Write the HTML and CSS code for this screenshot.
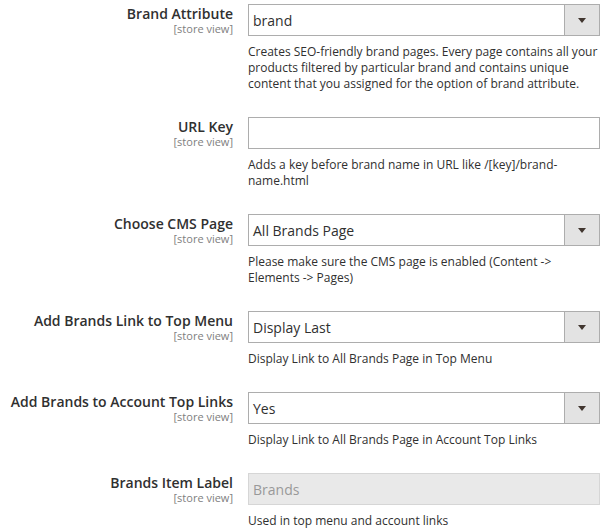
FILE: index.html
```html
<!DOCTYPE html>
<html>
<head>
<meta charset="utf-8">
<link rel="stylesheet" href="styles.css">
</head>
<body>
<div class="form">
  <div class="field">
    <div class="label"><span class="title">Brand Attribute</span><span class="scope">[store view]</span></div>
    <div class="control">
      <div class="select"><span class="value">brand</span><span class="btn"><span class="arrow"></span></span></div>
      <div class="note">Creates SEO-friendly brand pages. Every page contains all your products filtered by particular brand and contains unique content that you assigned for the option of brand attribute.</div>
    </div>
  </div>
  <div class="field">
    <div class="label"><span class="title">URL Key</span><span class="scope">[store view]</span></div>
    <div class="control">
      <div class="input"></div>
      <div class="note">Adds a key before brand name in URL like /[key]/brand-name.html</div>
    </div>
  </div>
  <div class="field">
    <div class="label"><span class="title">Choose CMS Page</span><span class="scope">[store view]</span></div>
    <div class="control">
      <div class="select"><span class="value">All Brands Page</span><span class="btn"><span class="arrow"></span></span></div>
      <div class="note">Please make sure the CMS page is enabled (Content -&gt; Elements -&gt; Pages)</div>
    </div>
  </div>
  <div class="field">
    <div class="label"><span class="title">Add Brands Link to Top Menu</span><span class="scope">[store view]</span></div>
    <div class="control">
      <div class="select"><span class="value">Display Last</span><span class="btn"><span class="arrow"></span></span></div>
      <div class="note">Display Link to All Brands Page in Top Menu</div>
    </div>
  </div>
  <div class="field">
    <div class="label"><span class="title">Add Brands to Account Top Links</span><span class="scope">[store view]</span></div>
    <div class="control">
      <div class="select"><span class="value">Yes</span><span class="btn"><span class="arrow"></span></span></div>
      <div class="note">Display Link to All Brands Page in Account Top Links</div>
    </div>
  </div>
  <div class="field">
    <div class="label"><span class="title">Brands Item Label</span><span class="scope">[store view]</span></div>
    <div class="control">
      <div class="input disabled"><span class="value">Brands</span></div>
      <div class="note">Used in top menu and account links</div>
    </div>
  </div>
</div>
</body>
</html>
```
FILE: styles.css
```css
html, body {
  margin: 0;
  padding: 0;
  background: #ffffff;
}
body {
  font-family: "Open Sans", "Liberation Sans", sans-serif;
  color: #303030;
}
.form {
  display: flex;
  flex-direction: column;
  gap: 25px;
  padding-top: 4px;
}
.field {
  display: flex;
  align-items: flex-start;
}
.label {
  width: 233px;
  flex: none;
  display: flex;
  flex-direction: column;
  align-items: flex-end;
  padding-top: 1px;
}
.title {
  font-size: 14px;
  font-weight: 600;
  line-height: 17px;
  color: #303030;
}
.scope {
  font-size: 11px;
  line-height: 13px;
  color: #808080;
}
.control {
  margin-left: 15px;
  width: 352px;
  flex: none;
}
.select, .input {
  box-sizing: border-box;
  height: 32px;
  border: 1px solid #adadad;
  display: flex;
  align-items: center;
  background: #fff;
}
.value {
  flex: 1;
  padding-left: 4px;
  font-size: 14px;
  color: #303030;
}
.btn {
  width: 34px;
  align-self: stretch;
  background: #e3e3e3;
  border-left: 1px solid #adadad;
  display: flex;
  align-items: center;
  justify-content: center;
}
.arrow {
  width: 0;
  height: 0;
  border-left: 4px solid transparent;
  border-right: 4px solid transparent;
  border-top: 5px solid #41362f;
}
.input.disabled {
  background: #e9e9e9;
  border-color: #d6d6d6;
}
.input.disabled .value {
  color: #999999;
}
.note {
  margin-top: 8px;
  font-size: 12px;
  line-height: 16px;
  color: #303030;
  width: 358px;
}
```
